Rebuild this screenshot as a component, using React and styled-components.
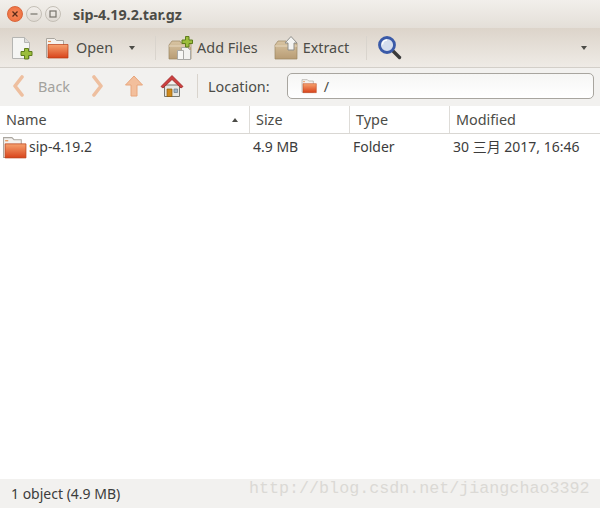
import React from "react";
import styled, { createGlobalStyle } from "styled-components";

const GlobalStyle = createGlobalStyle`
  html, body { margin: 0; padding: 0; background: #fff; }
  body { font-family: "Noto Sans", "Noto Sans CJK SC", sans-serif; font-size: 14px; color: #3c3c3c; }
`;

const PageFolder = ({ size = 22 }) => (
  <svg width={size} height={size} viewBox="0 0 24 24">
    <defs>
      <linearGradient id="fo" x1="0" y1="0" x2="0" y2="1">
        <stop offset="0" stopColor="#f6a26f" />
        <stop offset="1" stopColor="#d8431a" />
      </linearGradient>
    </defs>
    <path d="M1.500 2.500h8l2 2h7v17h-17z" fill="#f4f2ef" stroke="#aaa69f" />
    <path d="M3 5.500h3" stroke="#e8914f" strokeWidth="1.200" />
    <path d="M3 8.500h20v13.500H3z" fill="url(#fo)" stroke="#b93c14" strokeWidth=".7" />
  </svg>
);

const NewIcon = () => (
  <svg width="24" height="24" viewBox="0 0 24 24">
    <path d="M2.500 1.500h12l5 5v16h-17z" fill="#f5f5f3" stroke="#b5b5b2" />
    <path d="M14.500 1.500v5h5" fill="#dcdcd9" stroke="#b5b5b2" />
    <path d="M14.500 12.500h4v3h3.500v4h-3.500v3.500h-4V19.500h-3.500v-4h3.500z" fill="#9cbe3c" stroke="#5f7d1c" />
  </svg>
);

const ArchiveBox = ({ children }) => (
  <svg width="26" height="26" viewBox="0 0 26 26">
    <defs>
      <linearGradient id="box" x1="0" y1="0" x2="0" y2="1">
        <stop offset="0" stopColor="#d8c4a2" />
        <stop offset="1" stopColor="#b89c74" />
      </linearGradient>
    </defs>
    <path d="M1 10l3-4h8l1 2h10v16H1z" fill="url(#box)" stroke="#9c8663" strokeWidth=".7" />
    <path d="M1 11h22" stroke="#e6d8bf" />
    {children}
  </svg>
);

const AddIcon = () => (
  <ArchiveBox>
    <path d="M13.500 12.500h6l3 3v9h-9z" fill="#f2f2f0" stroke="#a9a9a6" />
    <path d="M9.500 15.500h6v9h-6z" fill="#f7f7f5" stroke="#a9a9a6" />
    <path d="M17.500 1.500h3.500v3.500h3.500v3.500H21v3.500h-3.500V8.500H14V5h3.500z" fill="#9cbe3c" stroke="#5f7d1c" />
  </ArchiveBox>
);

const ExtractIcon = () => (
  <ArchiveBox>
    <path d="M17 1.500l6 6.500h-3v7h-6V8h-3z" fill="#f4f4f2" stroke="#8f8f8b" />
  </ArchiveBox>
);

const SearchIcon = () => (
  <svg width="26" height="26" viewBox="0 0 26 26">
    <path d="M15 15l7.500 7.500" stroke="#3a3a3a" strokeWidth="3.400" strokeLinecap="round" />
    <circle cx="10" cy="10" r="7.500" fill="#d5deee" stroke="#3a5aa8" strokeWidth="2.800" />
    <path d="M5.500 9.500a4.500 4.500 0 0 1 4.500-4.500" fill="none" stroke="#fff" strokeWidth="1.500" />
  </svg>
);

const ChevronIcon = ({ left }) => (
  <svg width="14" height="22" viewBox="0 0 14 22">
    <path
      d={left ? "M10 2L3 11l7 9" : "M4 2l7 9-7 9"}
      fill="none"
      stroke="#eebf9f"
      strokeWidth="3.600"
      strokeLinejoin="round"
      strokeLinecap="round"
    />
  </svg>
);

const UpIcon = () => (
  <svg width="22" height="24" viewBox="0 0 22 24">
    <path d="M11 2l8.500 9h-5.500v11h-6V11H2.500z" fill="#f3bf9c" stroke="#e8a67c" strokeLinejoin="round" />
  </svg>
);

const HomeIcon = () => (
  <svg width="24" height="24" viewBox="0 0 24 24">
    <path d="M4.500 11h15v11.500h-15z" fill="#e6e6e2" stroke="#77776f" />
    <path d="M7 15h5v7.500H7z" fill="#d08a1c" stroke="#8d5b10" strokeWidth=".7" />
    <path d="M14 15h3.500v3.500H14z" fill="#9fb5c9" stroke="#6c7c8a" strokeWidth=".7" />
    <path d="M1 12.500L12 1.500l11 11-2 1.500-9-8.500-9 8.500z" fill="#cc3f3f" stroke="#9c2424" strokeWidth=".8" />
  </svg>
);

const Window = styled.div`
  width: 600px;
  height: 508px;
  display: flex;
  flex-direction: column;
  overflow: hidden;
  background: #fff;
`;

const TitleBar = styled.div`
  height: 28px;
  flex: none;
  display: flex;
  align-items: center;
  padding-left: 7px;
  box-sizing: border-box;
  background: linear-gradient(#f2efeb, #e4dfd8);
`;

const WinButton = styled.span`
  width: 16px;
  height: 16px;
  margin-right: 3px;
  box-sizing: border-box;
  border-radius: 50%;
  display: flex;
  align-items: center;
  justify-content: center;
  border: 1px solid ${(p) => (p.$close ? "#d9653a" : "#c4bfb6")};
  background: ${(p) => (p.$close ? "radial-gradient(#f58a5c, #ee6a3a)" : "linear-gradient(#f2efeb, #dfdad3)")};
  svg { display: block; }
`;

const Title = styled.span`
  margin-left: 9px;
  font-weight: 700;
  font-size: 14.300px;
  color: #4c4c47;
`;

const ToolBar = styled.div`
  height: 40px;
  flex: none;
  display: flex;
  align-items: center;
  box-sizing: border-box;
  padding: 0 13px 0 10px;
  background: linear-gradient(#dcd4ca, #efebe6);
  border-bottom: 1px solid #d3cfc9;
  color: #4c4c47;
`;

const ToolButton = styled.div`
  display: flex;
  align-items: center;
  gap: ${(p) => p.$gap || 5}px;
  margin-right: ${(p) => p.$after || 0}px;
  font-size: 14.400px;
`;

const Arrow = styled.span`
  width: 0;
  height: 0;
  margin-left: ${(p) => p.$left || 0}px;
  border-left: 3.500px solid transparent;
  border-right: 3.500px solid transparent;
  border-top: 4px solid #4c4c47;
`;

const EndArrow = styled(Arrow)`
  margin-left: auto;
`;

const Sep = styled.span`
  width: 1px;
  height: ${(p) => p.$h || 24}px;
  background: #d9d4cd;
  margin: 0 ${(p) => p.$right || 10}px 0 ${(p) => p.$left || 10}px;
`;

const LocationBar = styled.div`
  height: 38px;
  flex: none;
  display: flex;
  align-items: center;
  box-sizing: border-box;
  padding: 0 6px 2px 12px;
  background: #f2f1ef;
  color: #4c4c47;
  font-size: 14.400px;
`;

const NavLabel = styled.span`
  color: #a3a29d;
  margin: 0 20px 0 12px;
`;

const NavGap = styled.span`
  display: flex;
  margin-right: ${(p) => p.$after || 0}px;
`;

const PathField = styled.div`
  flex: 1;
  height: 26px;
  margin-left: 17px;
  box-sizing: border-box;
  display: flex;
  align-items: center;
  gap: 7px;
  padding-left: 13px;
  border: 1px solid #a8a59f;
  border-radius: 5px;
  background: linear-gradient(#f6f6f5, #ffffff);
`;

const Header = styled.div`
  height: 28px;
  flex: none;
  display: grid;
  grid-template-columns: 250px 100px 100px 1fr;
  background: #fff;
  border-bottom: 1px solid #d9d7d3;
  box-sizing: border-box;
  color: #4c4c47;
`;

const HeadCell = styled.div`
  display: flex;
  align-items: center;
  justify-content: space-between;
  padding: 0 6px;
  border-right: 1px solid #dedcd8;
  font-size: 14.400px;
  &:last-child { border-right: 0; }
`;

const SortArrow = styled.span`
  width: 0;
  height: 0;
  margin-right: 5px;
  border-left: 3.500px solid transparent;
  border-right: 3.500px solid transparent;
  border-bottom: 4px solid #4c4c47;
`;

const Rows = styled.div`
  flex: 1;
  background: #fff;
`;

const Row = styled.div`
  display: grid;
  grid-template-columns: 253px 100px 100px 1fr;
  grid-template-rows: 24px;
  height: 26px;
  align-items: center;
  font-size: 14px;
  color: #3c3c3c;
`;

const NameCell = styled.div`
  display: flex;
  align-items: center;
  gap: 2px;
  padding-left: 2px;
  svg { margin-top: 2px; }
`;

const StatusBar = styled.div`
  height: 29px;
  flex: none;
  box-sizing: border-box;
  display: flex;
  align-items: center;
  padding-left: 11px;
  background: #f2f1ef;
  font-size: 14px;
  color: #3c3c3c;
  position: relative;
`;

const Watermark = styled.span`
  position: absolute;
  left: 249px;
  top: 0;
  font-family: "Liberation Mono", monospace;
  font-size: 16.700px;
  color: #dbd9d5;
  line-height: 20px;
`;

export default function App() {
  return (
    <Window>
      <GlobalStyle />
      <TitleBar>
        <WinButton $close>
          <svg width="8" height="8" viewBox="0 0 8 8">
            <path d="M1.500 1.500l5 5m0-5l-5 5" stroke="#5a2a18" strokeWidth="1.300" />
          </svg>
        </WinButton>
        <WinButton>
          <svg width="8" height="8" viewBox="0 0 8 8">
            <path d="M0.500 4h7" stroke="#77736c" strokeWidth="1.200" />
          </svg>
        </WinButton>
        <WinButton>
          <svg width="8" height="8" viewBox="0 0 8 8">
            <rect x="1" y="1" width="6" height="6" fill="none" stroke="#77736c" strokeWidth="1.200" />
          </svg>
        </WinButton>
        <Title>sip-4.19.2.tar.gz</Title>
      </TitleBar>
      <ToolBar>
        <ToolButton $after={11}>
          <NewIcon />
        </ToolButton>
        <ToolButton $gap={7}>
          <PageFolder size={24} />
          Open
          <Arrow $left={9} />
        </ToolButton>
        <Sep $left={20} $right={12} />
        <ToolButton $gap={3} $after={16}>
          <AddIcon />
          Add Files
        </ToolButton>
        <ToolButton $gap={3}>
          <ExtractIcon />
          Extract
        </ToolButton>
        <Sep $left={17} $right={10} />
        <SearchIcon />
        <EndArrow />
      </ToolBar>
      <LocationBar>
        <NavGap>
          <ChevronIcon left />
        </NavGap>
        <NavLabel>Back</NavLabel>
        <NavGap $after={19}>
          <ChevronIcon />
        </NavGap>
        <NavGap $after={15}>
          <UpIcon />
        </NavGap>
        <HomeIcon />
        <Sep $h={24} $left={13} $right={10} />
        <span>Location:</span>
        <PathField>
          <PageFolder size={16} />/
        </PathField>
      </LocationBar>
      <Header>
        <HeadCell>
          Name
          <SortArrow />
        </HeadCell>
        <HeadCell>Size</HeadCell>
        <HeadCell>Type</HeadCell>
        <HeadCell>Modified</HeadCell>
      </Header>
      <Rows>
        <Row>
          <NameCell>
            <PageFolder size={25} />
            sip-4.19.2
          </NameCell>
          <span>4.9 MB</span>
          <span>Folder</span>
          <span>30 三月 2017, 16:46</span>
        </Row>
      </Rows>
      <StatusBar>
        1 object (4.9 MB)
        <Watermark>http://blog.csdn.net/jiangchao3392</Watermark>
      </StatusBar>
    </Window>
  );
}
